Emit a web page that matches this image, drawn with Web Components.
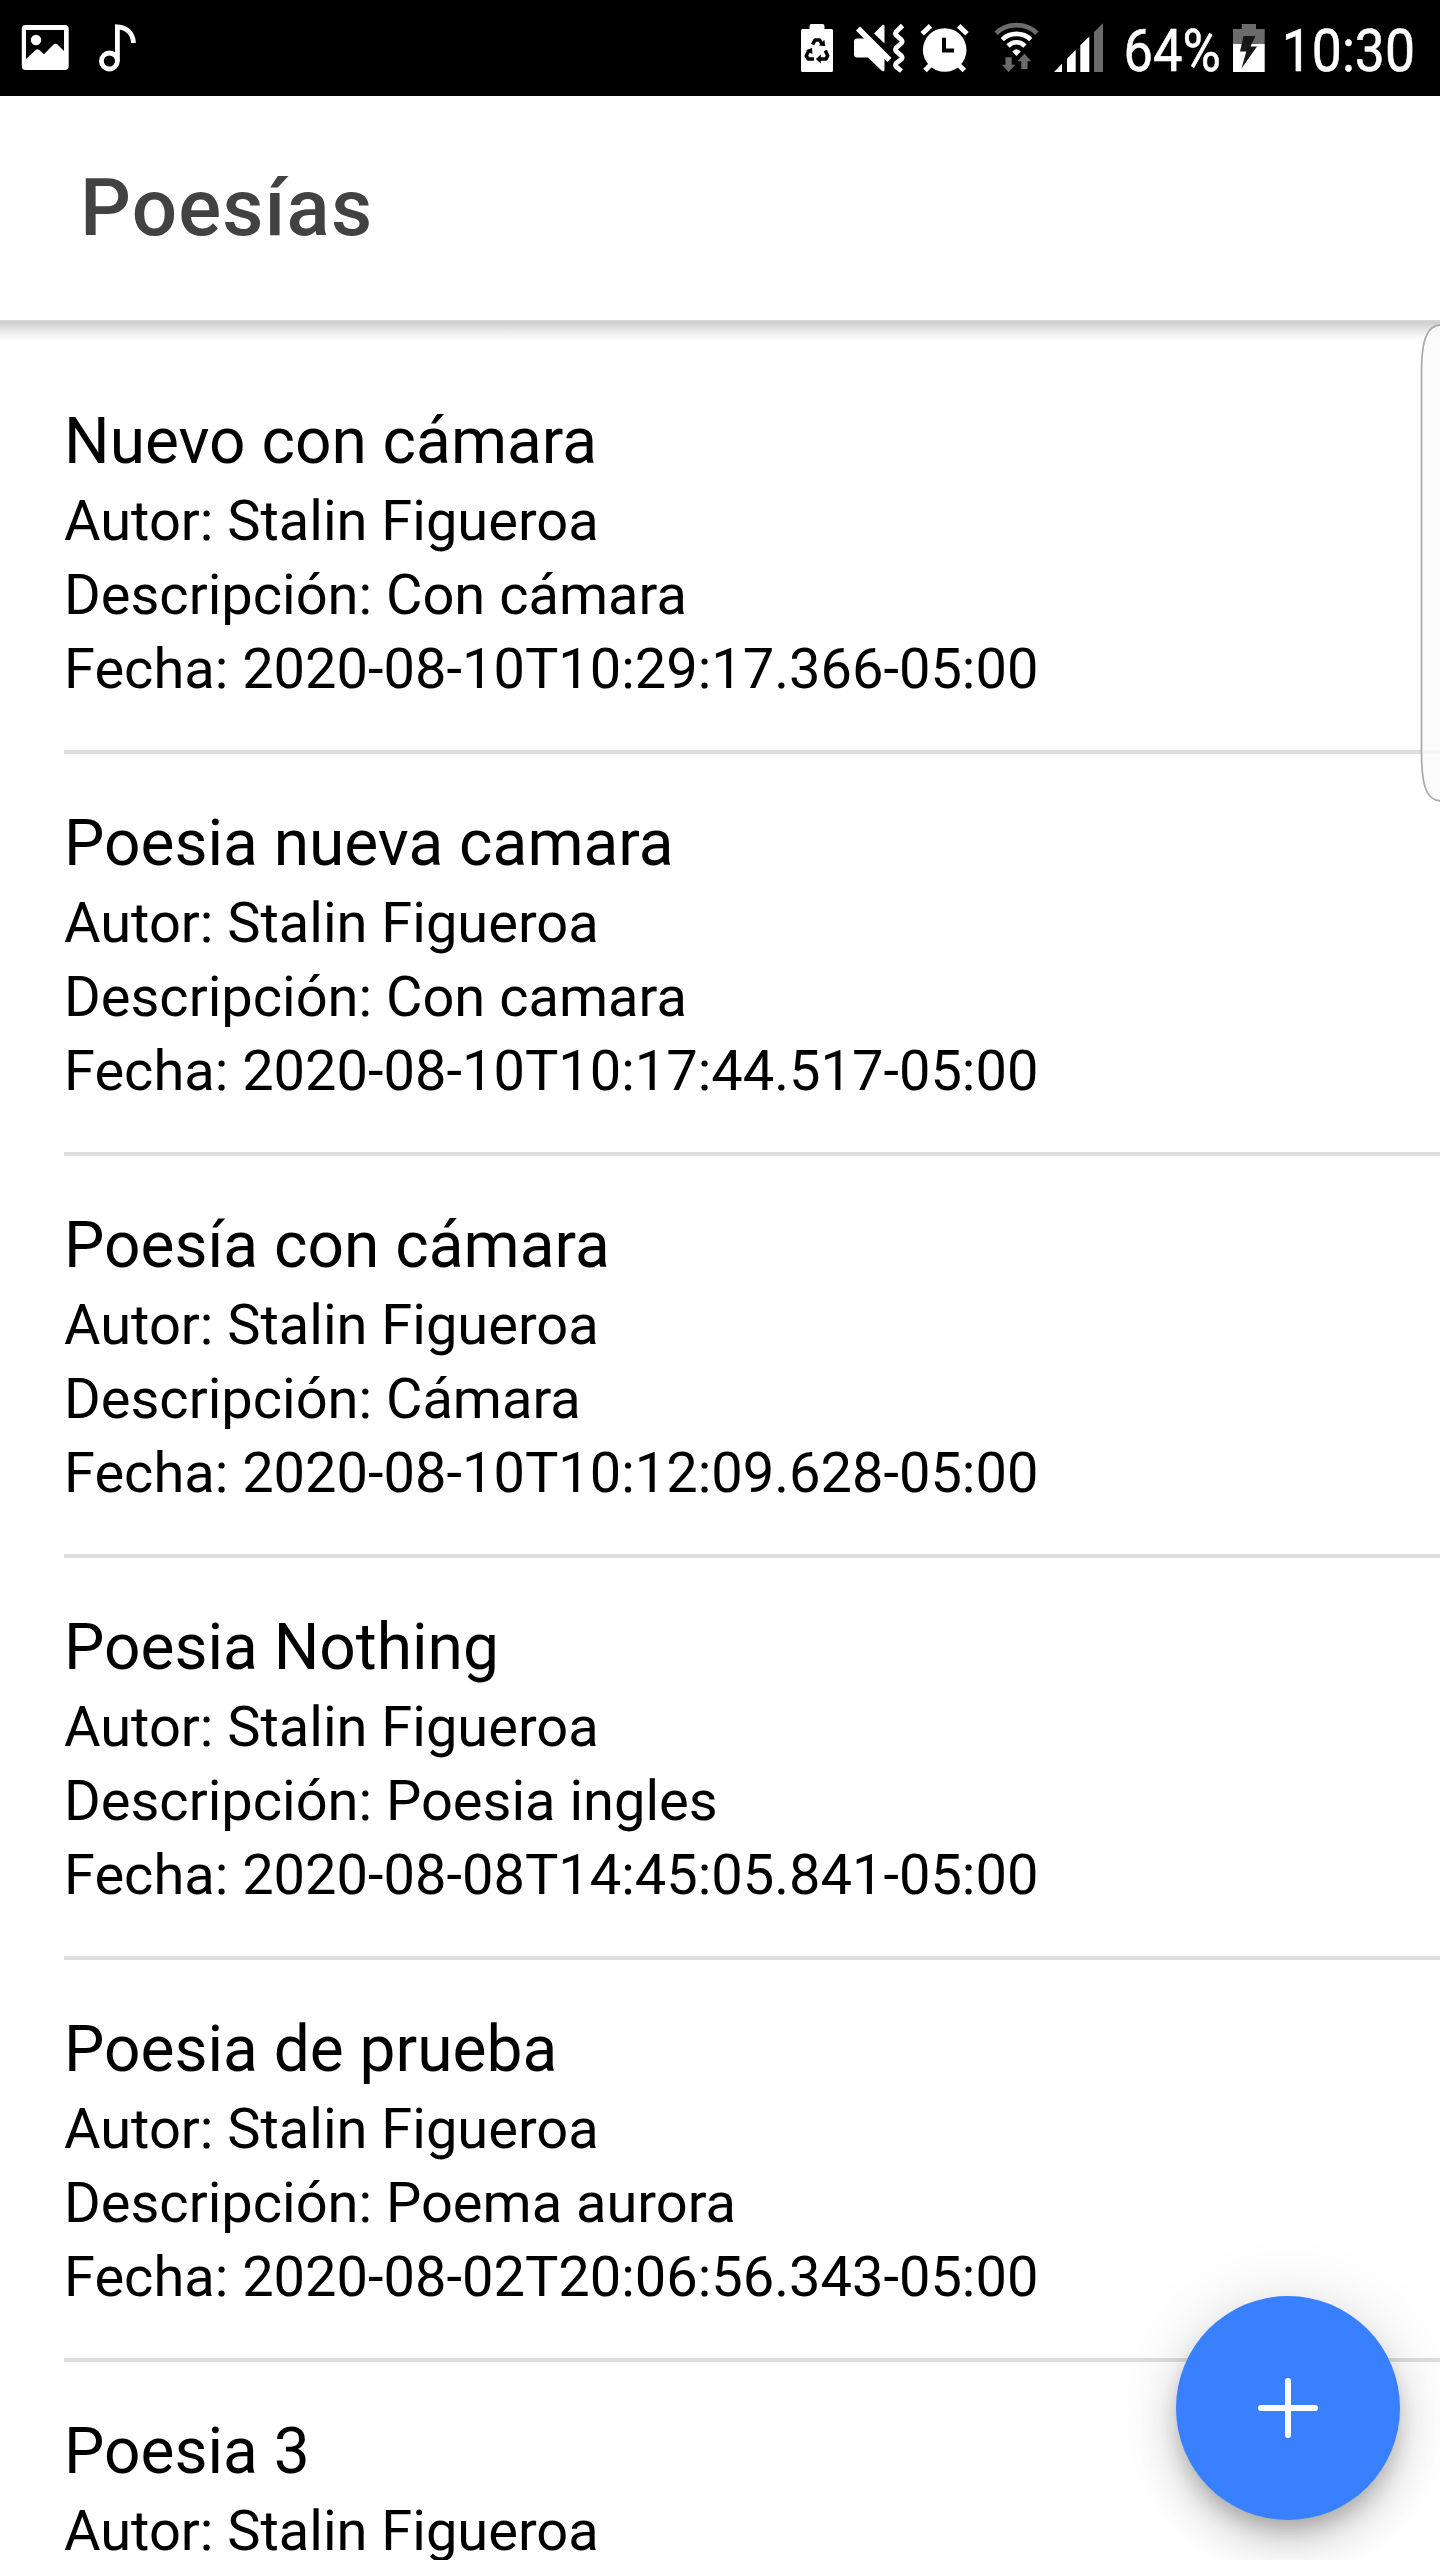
<!DOCTYPE html>
<html lang="es">
<head>
<meta charset="utf-8">
<title>Poesías</title>
<style>
  html, body { margin: 0; height: 100%; background: #fff; }
  body { font-family: Roboto, "Liberation Sans", sans-serif; overflow: hidden; }
</style>
</head>
<body>
<poem-app></poem-app>
<script>
const ICONS = {
  image: ['21 24 48 47', `<path fill="#fff" fill-rule="evenodd" d="M25.500 25H65q3.700 0 3.700 3.700V66.300q0 3.700-3.700 3.700H25.500q-3.700 0-3.700-3.700V28.700q0-3.700 3.700-3.700zM26 30V59L36 49.800q1.500-1.200 3 0L44 54.200 53.500 44.600q2-1.600 4 0L64 51V30z"/><circle cx="36" cy="40" r="5.200" fill="#fff"/>`],
  note: ['98 23 40 49', `<g fill="none" stroke="#fff" stroke-width="4.800"><circle cx="109.400" cy="61" r="8"/><path d="M117.400 61V26.800C127 27.500 133 33 133.500 43"/></g>`],
  saver: ['801 24 32 48', `<path fill="#fff" d="M809.500 29V26q0-2 2-2h11q2 0 2 2v3h7q1.500 0 1.500 1.500V70.500q0 1.500-1.500 1.500H802.500q-1.500 0-1.500-1.500V30.500q0-1.500 1.500-1.500z"/><g fill="none" stroke="#000" stroke-width="3.500" stroke-linejoin="round"><path d="M812.600 44.600l2.400-4.600h4.600l2.600 4.600M825.300 50.500l2.400 5.300-1.700 3.200h-6.500M814 59h-5.800l-2-3.200 3.200-6"/></g><path d="M819 45.500l6.300 .8-1-6.600zM820.800 54.500v9l-4.900-4.500zM806 50.700l6-2.900.4 6.200z"/>`],
  mute: ['854 24 52 48', `<path fill="#fff" d="M874 33.500L882 25.300q1.500-1.200 2.500 0V43.500zM857 38.600H866L884.500 57V70.500q-1 1.500-3 0L868 57.500H857q-3 0-3-3V41.600q0-3 3-3z"/><path d="M858 28.500L889.500 60" stroke="#fff" stroke-width="5.800"/><path d="M902.500 25.500L896 32q-1 1.500 0 3l5.500 5q1.200 1.500 0 3L896 48q-1 1.500 0 3l5.500 5q1.200 1.500 0 3L896 63.500q-1 1.500 0 3L901.500 71" fill="none" stroke="#fff" stroke-width="4.800"/>`],
  alarm: ['920 24 49 48', `<circle cx="944.700" cy="50" r="21.800" fill="#fff"/><path d="M922.200 33.700l8.300-7.800M967 33.700l-8.300-7.800M931 64.500l-6 6M958.300 64.500l6 6" stroke="#fff" stroke-width="5"/><path d="M944 37.800V50.500H954" fill="none" stroke="#000" stroke-width="4"/>`],
  wifi: ['995 23 43 49', `<path d="M996.200 33.200C1007 22.500 1026 22.500 1036.800 33.200" fill="none" stroke="#6b6b6b" stroke-width="4.800"/><g fill="none" stroke="#fff" stroke-width="4.600"><path d="M1002.300 39.600C1010 32 1023 32 1030.700 39.600M1008 46C1013 41 1020 41 1025 46"/></g><path fill="#fff" d="M1012.300 51.600q4.200-4.500 8.400 0L1016.500 56z"/><path fill="#6b6b6b" d="M1005.500 57.300h6.200v7.500h3.600L1008.600 72l-6.700-7.200h3.600zM1021.300 69v-7.700h-3.800l7-7.600 6.700 7.600h-3.700V69z"/>`],
  signal: ['1053 23 51 49', `<path fill="#fff" d="M1054 72l8-8.300V72zM1067 72V58.700l8.700-8.700V72zM1080.300 72V45.300l9-8.700V72z"/><path fill="#6b6b6b" d="M1094 72V32l9-8.800V72z"/>`],
  percent: ['1124 12 98 72', `<text x="1123.500" y="71" font-size="60" textLength="97.300" lengthAdjust="spacingAndGlyphs" fill="#fff" stroke="#fff" stroke-width=".6">64%</text>`],
  battery: ['1233 24 32 48', `<path fill="#6b6b6b" d="M1233 44V29h8.700v-5H1256v5h8.700V44z"/><path fill="#fff" d="M1233 44h31.700V72H1233z"/><path fill="#171717" d="M1243.500 36H1255.500L1250.500 46.500H1257L1241.500 68.500 1246.300 51.500H1240z"/>`],
  clock: ['1281 12 134 72', `<text x="1281.800" y="71" font-size="60" textLength="133.200" lengthAdjust="spacingAndGlyphs" fill="#fff" stroke="#fff" stroke-width=".6">10:30</text>`]
};

class StatusGlyph extends HTMLElement {
  connectedCallback() {
    const [box, body] = ICONS[this.getAttribute('name')];
    const [, , w, h] = box.split(' ');
    this.attachShadow({ mode: 'open' }).innerHTML = `
      <style>:host{display:block;flex:none} svg{display:block;overflow:visible;font-family:Roboto,"Liberation Sans",sans-serif}</style>
      <svg width="${w}" height="${h}" viewBox="${box}">${body}</svg>`;
  }
}
customElements.define('status-glyph', StatusGlyph);

class StatusBar extends HTMLElement {
  constructor() {
    super();
    this.attachShadow({ mode: 'open' }).innerHTML = `
      <style>
        :host{display:flex;justify-content:space-between;height:96px;box-sizing:border-box;padding:0 25px 0 21px;background:#000}
        div{display:flex;align-items:center;height:96px}
        .left{gap:29px}
        .left status-glyph{padding-bottom:1px}
      </style>
      <div class="left"><status-glyph name="image"></status-glyph><status-glyph name="note"></status-glyph></div>
      <div>
        <status-glyph name="saver" style="margin-right:21px"></status-glyph>
        <status-glyph name="mute" style="margin-right:14px"></status-glyph>
        <status-glyph name="alarm" style="margin-right:26px"></status-glyph>
        <status-glyph name="wifi" style="margin-right:15px;padding-bottom:1px"></status-glyph>
        <status-glyph name="signal" style="margin-right:20px;padding-bottom:1px"></status-glyph>
        <status-glyph name="percent" style="margin-right:11px"></status-glyph>
        <status-glyph name="battery" style="margin-right:16px"></status-glyph>
        <status-glyph name="clock"></status-glyph>
      </div>`;
  }
}
customElements.define('status-bar', StatusBar);

class AppHeader extends HTMLElement {
  constructor() {
    super();
    this.attachShadow({ mode: 'open' }).innerHTML = `
      <style>
        :host{display:block;background:#fff}
        h1{margin:0;height:224px;box-sizing:border-box;padding:65px 80px 0;font-size:80px;line-height:94px;font-weight:500;letter-spacing:1.15px;color:#424242}
        .shade{height:20px;background:linear-gradient(#dadada 0,#d0d0d0 10%,#d3d3d3 20%,#e2e2e2 45%,#f2f2f2 70%,#fafafa 90%,#fbfbfb 100%)}
      </style>
      <h1><slot></slot></h1><div class="shade"></div>`;
  }
}
customElements.define('app-header', AppHeader);

class PoemItem extends HTMLElement {
  connectedCallback() {
    const line = (label, name) => this.hasAttribute(name) ? `<p>${label}: ${this.getAttribute(name)}</p>` : '';
    this.attachShadow({ mode: 'open' }).innerHTML = `
      <style>
        :host{display:block;margin-left:64px;padding:52px 0 44px;border-bottom:4px solid #dedede;color:#000;white-space:nowrap}
        h2{margin:0 0 5px;font-size:64px;line-height:75px;font-weight:400}
        p{margin:0;font-size:56px;line-height:74px}
      </style>
      <h2><slot></slot></h2>
      ${line('Autor', 'author')}${line('Descripción', 'description')}${line('Fecha', 'date')}`;
  }
}
customElements.define('poem-item', PoemItem);

class EdgeHandle extends HTMLElement {
  constructor() {
    super();
    this.attachShadow({ mode: 'open' }).innerHTML = `
      <style>:host{position:absolute;right:0;top:322px;width:20px;height:482px} svg{display:block}</style>
      <svg width="20" height="482" viewBox="1420 322 20 482"><path d="M1442 324.800C1428 324.800 1421.500 337 1421.500 372V752C1421.500 788 1427 801 1442 801" fill="#fafafa" fill-opacity=".85" stroke="#a8a8a8" stroke-width="1.700"/></svg>`;
  }
}
customElements.define('edge-handle', EdgeHandle);

class FabButton extends HTMLElement {
  constructor() {
    super();
    this.attachShadow({ mode: 'open' }).innerHTML = `
      <style>
        :host{position:absolute;right:40px;bottom:40px}
        button{display:flex;align-items:center;justify-content:center;width:224px;height:224px;padding:0;border:0;border-radius:50%;background:#3880ff;
          box-shadow:0 12px 20px -4px rgba(0,0,0,.2),0 24px 40px 0 rgba(0,0,0,.14),0 4px 72px 0 rgba(0,0,0,.12)}
      </style>
      <button aria-label="Agregar"><svg width="60" height="60" viewBox="0 0 60 60"><path d="M30 3v54M3 30h54" stroke="#fff" stroke-width="6" stroke-linecap="round"/></svg></button>`;
  }
}
customElements.define('fab-button', FabButton);

class PoemApp extends HTMLElement {
  constructor() {
    super();
    this.attachShadow({ mode: 'open' }).innerHTML = `
      <style>
        :host{display:flex;flex-direction:column;position:relative;width:1440px;height:2560px;overflow:hidden;background:#fff}
        main{display:flex;flex-direction:column;padding-top:12px}
        status-bar,app-header,poem-item{flex:none}
      </style>
      <status-bar></status-bar>
      <app-header>Poesías</app-header>
      <main>
        <poem-item author="Stalin Figueroa" description="Con cámara" date="2020-08-10T10:29:17.366-05:00">Nuevo con cámara</poem-item>
        <poem-item author="Stalin Figueroa" description="Con camara" date="2020-08-10T10:17:44.517-05:00">Poesia nueva camara</poem-item>
        <poem-item author="Stalin Figueroa" description="Cámara" date="2020-08-10T10:12:09.628-05:00">Poesía con cámara</poem-item>
        <poem-item author="Stalin Figueroa" description="Poesia ingles" date="2020-08-08T14:45:05.841-05:00">Poesia Nothing</poem-item>
        <poem-item author="Stalin Figueroa" description="Poema aurora" date="2020-08-02T20:06:56.343-05:00">Poesia de prueba</poem-item>
        <poem-item author="Stalin Figueroa">Poesia 3</poem-item>
      </main>
      <edge-handle></edge-handle>
      <fab-button></fab-button>`;
  }
}
customElements.define('poem-app', PoemApp);
</script>
</body>
</html>
